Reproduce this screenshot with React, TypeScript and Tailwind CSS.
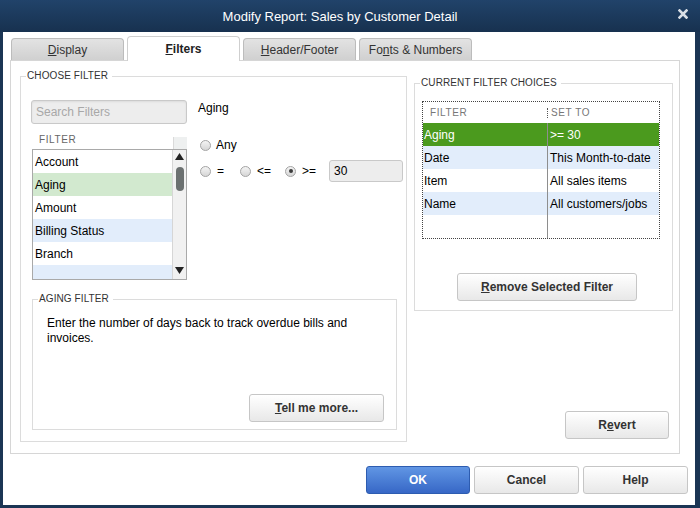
import React from "react";

function Radio({ checked }: { checked?: boolean }) {
  return (
    <span className="w-[11px] h-[11px] rounded-full border border-[#a4a4a4] bg-linear-to-b from-[#f4f4f4] to-[#d6d6d6] flex items-center justify-center shrink-0">
      {checked && <span className="w-[4px] h-[4px] rounded-full bg-[#3c3c3c]" />}
    </span>
  );
}

function Legend({ children }: { children: React.ReactNode }) {
  return (
    <span className="absolute left-[5px] -top-[7px] bg-white pl-[1px] pr-[4px] text-[10px] leading-[12px] text-[#333] tracking-[0.1px]">
      {children}
    </span>
  );
}

function Btn({ children, className }: { children: React.ReactNode; className: string }) {
  return (
    <div
      className={
        "flex items-center justify-center rounded-[3px] border border-[#c6c6c6] bg-linear-to-b from-[#ffffff] to-[#e8e8e8] text-[12px] font-bold text-[#333] shadow-[inset_0_1px_0_#ffffff] shrink-0 " +
        className
      }
    >
      {children}
    </div>
  );
}

const listRows = [
  { t: "Account", bg: "bg-white" },
  { t: "Aging", bg: "bg-[#d2e9cf]" },
  { t: "Amount", bg: "bg-white" },
  { t: "Billing Status", bg: "bg-[#e2edfb]" },
  { t: "Branch", bg: "bg-white" },
];

const tableRows = [
  { a: "Aging", b: ">= 30", bg: "bg-[#4b9a1e]", text: "text-white" },
  { a: "Date", b: "This Month-to-date", bg: "bg-[#e2edfb]", text: "text-black" },
  { a: "Item", b: "All sales items", bg: "bg-white", text: "text-black" },
  { a: "Name", b: "All customers/jobs", bg: "bg-[#e2edfb]", text: "text-black" },
  { a: "", b: "", bg: "bg-white", text: "text-black" },
];

export default function App() {
  return (
    <div className="w-[700px] h-[508px] bg-[#1b3554] flex flex-col pl-[3px] pr-[5px] pb-[3px] font-['Liberation_Sans',Arial,sans-serif] overflow-hidden">
      {/* Title bar */}
      <div className="h-[32px] -ml-[3px] -mr-[5px] relative flex items-center justify-center bg-linear-to-b from-[#21436a] to-[#17314f] pr-[20px]">
        <span className="text-white text-[13px] leading-none">Modify Report: Sales by Customer Detail</span>
        <svg className="absolute right-[12px] top-[9px]" width="10" height="10" viewBox="0 0 10 10">
          <path d="M1.5 1.5 L8.5 8.5 M8.5 1.5 L1.5 8.5" stroke="#d9dee5" strokeWidth="2.6" strokeLinecap="square" />
        </svg>
      </div>

      {/* Content */}
      <div className="flex-1 bg-white flex flex-col pl-[7px] pt-[4px]">
        {/* Tabs */}
        <div className="h-[24px] flex items-end gap-[3px] ml-[1px]">
          <div className="w-[113px] h-[22px] border border-b-0 border-[#bcbcbc] rounded-t-[4px] bg-linear-to-b from-[#e3e3e3] to-[#d0d0d0] flex items-center justify-center text-[12px] text-[#333]">
            <span><span className="underline">D</span>isplay</span>
          </div>
          <div className="relative z-10 -mb-px w-[113px] h-[25px] border border-b-0 border-[#cfcfcf] rounded-t-[4px] bg-white flex items-center justify-center text-[12px] font-bold text-[#222] pb-[1px]">
            <span><span className="underline">F</span>ilters</span>
          </div>
          <div className="w-[113px] h-[22px] border border-b-0 border-[#bcbcbc] rounded-t-[4px] bg-linear-to-b from-[#e3e3e3] to-[#d0d0d0] flex items-center justify-center text-[12px] text-[#333]">
            <span><span className="underline">H</span>eader/Footer</span>
          </div>
          <div className="w-[113px] h-[22px] border border-b-0 border-[#bcbcbc] rounded-t-[4px] bg-linear-to-b from-[#e3e3e3] to-[#d0d0d0] flex items-center justify-center text-[12px] text-[#333]">
            <span>Fo<span className="underline">n</span>ts &amp; Numbers</span>
          </div>
        </div>

        {/* Panel */}
        <div className="w-[670px] h-[394px] border border-[#d6d6d6] flex pl-[9px] pr-[6px]">
          {/* Choose filter */}
          <div className="relative shrink-0 mt-[15px] w-[387px] h-[366px] border border-[#dcdcdc] pl-[10px] pt-[23px] flex flex-col">
            <Legend>CHOOSE FILTER</Legend>
            <div className="flex">
              {/* left column */}
              <div className="w-[156px] shrink-0 flex flex-col">
                <div className="h-[24px] rounded-[3px] border border-[#c9c9c9] bg-[#ededed] shadow-[inset_0_1px_2px_rgba(0,0,0,0.08)] flex items-center pl-[4px] text-[12px] text-[#a8a8a8]">
                  Search Filters
                </div>
                <div className="mt-[6px] ml-[1px] h-[19px] flex">
                  <div className="flex-1 flex items-center pl-[7px] text-[10px] text-[#666] tracking-[0.6px]">FILTER</div>
                  <div className="w-[14px] mt-[7px] bg-[#eef0f0] border-l border-[#dadada]" />
                </div>
                <div className="ml-[1px] h-[131px] border border-[#a9a9a9] flex overflow-hidden">
                  <div className="flex-1 flex flex-col">
                    {listRows.map((r) => (
                      <div key={r.t} className={"h-[23px] shrink-0 flex items-center pl-[2px] text-[12px] text-black " + r.bg}>
                        {r.t}
                      </div>
                    ))}
                    <div className="flex-1 bg-[#e2edfb]" />
                  </div>
                  <div className="w-[14px] bg-[#f1f1f1] border-l border-[#d6d6d6] flex flex-col items-center">
                    <svg className="mt-[3px]" width="9" height="7" viewBox="0 0 9 7">
                      <path d="M4.5 0 L9 7 L0 7 Z" fill="#222" />
                    </svg>
                    <div className="mt-[7px] w-[8px] h-[24px] rounded-[4px] bg-[#6b7070]" />
                    <div className="flex-1" />
                    <svg className="mb-[5px]" width="9" height="7" viewBox="0 0 9 7">
                      <path d="M0 0 L9 0 L4.5 7 Z" fill="#222" />
                    </svg>
                  </div>
                </div>
              </div>
              {/* right column */}
              <div className="ml-[11px] shrink-0 flex flex-col">
                <div className="h-[15px] flex items-center text-[12px] text-black">Aging</div>
                <div className="mt-[23px] h-[14px] flex items-center pl-[2px] gap-[5px] text-[12px] text-black">
                  <Radio />
                  <span>Any</span>
                </div>
                <div className="mt-[8px] h-[22px] flex items-center pl-[2px] text-[12px] text-black">
                  <div className="w-[40px] shrink-0 flex items-center gap-[6px]">
                    <Radio />
                    <span>=</span>
                  </div>
                  <div className="w-[45px] shrink-0 flex items-center gap-[6px]">
                    <Radio />
                    <span>&lt;=</span>
                  </div>
                  <div className="w-[44px] shrink-0 flex items-center gap-[6px]">
                    <Radio checked />
                    <span>&gt;=</span>
                  </div>
                  <div className="w-[74px] shrink-0 h-[22px] rounded-[3px] border border-[#c9c9c9] bg-[#ededed] flex items-center pl-[4px]">30</div>
                </div>
              </div>
            </div>

            {/* Aging filter */}
            <div className="relative mt-[19px] ml-[1px] w-[365px] h-[131px] border border-[#dcdcdc] flex flex-col pl-[14px] pt-[16px]">
              <Legend>AGING FILTER</Legend>
              <div className="w-[330px] text-[12px] leading-[15px] text-black">
                Enter the number of days back to track overdue bills and invoices.
              </div>
              <div className="flex-1" />
              <Btn className="self-end mr-[12px] mb-[7px] w-[135px] h-[28px]">
                <span><span className="underline">T</span>ell me more...</span>
              </Btn>
            </div>
          </div>

          {/* Right side */}
          <div className="ml-[7px] shrink-0 flex flex-col">
            <div className="relative mt-[22px] w-[259px] h-[228px] border border-[#dcdcdc] pl-[7px] pt-[17px] flex flex-col">
              <Legend>CURRENT FILTER CHOICES</Legend>
              <div className="w-[238px] h-[138px] border border-dotted border-[#444] flex flex-col">
                <div className="h-[21px] flex items-center text-[10px] text-[#777] tracking-[0.6px]">
                  <div className="w-[124px] pl-[7px]">FILTER</div>
                  <div className="flex items-center">
                    <span className="w-px h-[10px] border-l border-dotted border-[#555]" />
                    <span className="pl-[3px]">SET TO</span>
                  </div>
                </div>
                {tableRows.map((r, i) => (
                  <div key={i} className={"h-[23px] flex text-[12px] " + r.bg + " " + r.text}>
                    <div className="w-[124px] flex items-center pl-[1px]">{r.a}</div>
                    <div className="flex-1 flex items-center pl-[2px] border-l border-[#8e8e8e]">{r.b}</div>
                  </div>
                ))}
              </div>
              <Btn className="mt-[34px] ml-[35px] w-[180px] h-[28px]">
                <span><span className="underline">R</span>emove Selected Filter</span>
              </Btn>
            </div>
            <div className="flex-1" />
            <Btn className="self-end mr-[4px] mb-[14px] w-[104px] h-[28px]">
              <span>R<span className="underline">e</span>vert</span>
            </Btn>
          </div>
        </div>

        {/* Bottom buttons */}
        <div className="mt-[12px] flex justify-end gap-[4px] pr-[7px]">
          <div className="w-[104px] h-[28px] rounded-[3px] border border-[#2d5cb0] bg-linear-to-b from-[#6196e4] to-[#3767c6] flex items-center justify-center text-[12px] font-bold text-white">
            OK
          </div>
          <Btn className="w-[105px] h-[28px]">Cancel</Btn>
          <Btn className="w-[105px] h-[28px]">Help</Btn>
        </div>
      </div>
    </div>
  );
}
